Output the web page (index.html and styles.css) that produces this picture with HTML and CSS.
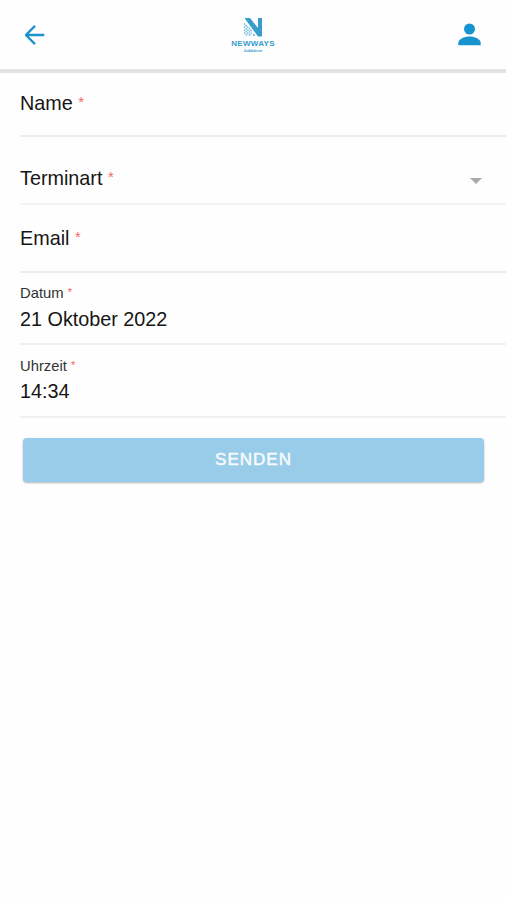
FILE: index.html
```html
<!DOCTYPE html>
<html lang="de">
<head>
<meta charset="utf-8">
<title>Termin</title>
<link rel="stylesheet" href="styles.css">
</head>
<body>
<header class="toolbar">
  <svg class="back" viewBox="0 0 20 20"><path d="M19.300 10H1.400M10 .9.9 10l9.100 9.100"/></svg>
  <div class="brand">
    <svg class="mark" viewBox="0 0 18 19">
      <path class="solid" d="M1 0h5l8 10V0h4v18.500h-4L1 .8z"/>
      <path class="hatch" d="M0 5.500l8 8M0 8.500l7.500 7.500M0 11.500l6 6M0 14.500l3.500 3.500"/>
      <path class="window" d="M9 16h2v2H9z"/>
    </svg>
    <span class="brand-name">NEWWAYS</span>
    <span class="brand-sub">Jobbörse</span>
  </div>
  <svg class="user" viewBox="0 0 23 23"><circle cx="11.500" cy="6" r="5.500"/><path d="M.3 22.300v-2.100c0-4.200 6.100-6.600 11.200-6.600s11.200 2.400 11.200 6.600v2.100z"/></svg>
</header>
<main class="form">
  <div class="field name"><label>Name <i>*</i></label></div>
  <div class="field type"><label>Terminart <i>*</i></label><span class="caret"></span></div>
  <div class="field email"><label>Email <i>*</i></label></div>
  <div class="field stacked date"><label>Datum <i>*</i></label><span class="value">21 Oktober 2022</span></div>
  <div class="field stacked time"><label>Uhrzeit <i>*</i></label><span class="value">14:34</span></div>
  <button class="send">SENDEN</button>
</main>
</body>
</html>
```
FILE: styles.css
```css
* { box-sizing: border-box; }
body {
  margin: 0;
  min-height: 100vh;
  background: #fefefe;
  color: #151515;
  font-family: "Liberation Sans", Arial, sans-serif;
}
.toolbar {
  height: 73px;
  padding: 0 25px;
  display: grid;
  grid-template-columns: 1fr 60px 1fr;
  align-items: start;
  border-bottom: 4px solid #e3e3e3;
}
.back {
  width: 20px;
  height: 20px;
  margin-top: 25px;
  fill: none;
  stroke: #1e93ca;
  stroke-width: 2.4;
}
.user {
  width: 23px;
  height: 23px;
  margin-top: 23px;
  justify-self: end;
  fill: #1793cf;
}
.brand {
  padding-top: 18px;
  display: flex;
  flex-direction: column;
  align-items: center;
  color: #369dcc;
}
.mark { width: 18px; height: 19px; }
.solid { fill: #369dcc; }
.hatch { fill: none; stroke: #62b3d9; stroke-width: 1.3; stroke-dasharray: 1.6 .7; }
.window { fill: #80c1df; }
.brand-name {
  margin-top: 3px;
  font-size: 8px;
  line-height: 8px;
  font-weight: bold;
  letter-spacing: .3px;
}
.brand-sub {
  font-size: 4.2px;
  line-height: 6px;
  font-weight: bold;
}
.form { display: flex; flex-direction: column; }
.field {
  margin-left: 20px;
  border-bottom: 2px solid #ececec;
  font-size: 19.8px;
  line-height: 24px;
}
.field i {
  color: #f4685f;
  font-style: normal;
  font-size: .75em;
  line-height: 1;
  vertical-align: .17em;
}
.name { height: 64px; padding-top: 18px; }
.type {
  height: 68px;
  padding: 29px 24px 0 0;
  display: flex;
  justify-content: space-between;
  border-color: #f3f3f3;
}
.caret {
  margin-top: 12px;
  width: 12px;
  height: 6px;
  background: #a9a9a9;
  clip-path: polygon(0 0, 100% 0, 50% 100%);
}
.email { height: 68px; padding-top: 21px; }
.stacked {
  padding-top: 11px;
  display: flex;
  flex-direction: column;
  border-color: #f0f0f0;
}
.stacked label { font-size: 14.8px; line-height: 18px; color: #333; }
.value { margin-top: 5px; }
.date { height: 72px; }
.time { height: 73px; padding-top: 12px; }
.time .value { margin-top: 4px; }
.send {
  margin: 20px 22px 0 23px;
  height: 44px;
  padding: 0;
  border: 0;
  border-radius: 4px;
  background: #98cce8;
  box-shadow: 0 1px 2px #0000004d;
  color: #f6fbfe;
  font: 17px "Liberation Sans", Arial, sans-serif;
  letter-spacing: 1px;
  -webkit-text-stroke: .5px #f6fbfe;
}
```
